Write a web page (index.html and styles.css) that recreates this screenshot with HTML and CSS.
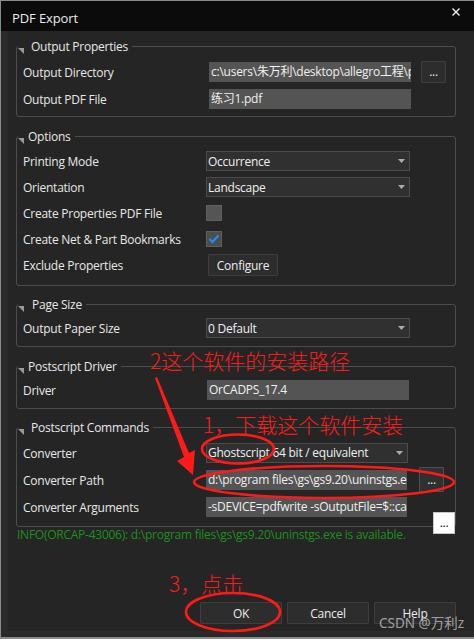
FILE: index.html
```html
<!DOCTYPE html>
<html>
<head>
<meta charset="utf-8">
<title>PDF Export</title>
<link rel="stylesheet" href="styles.css">
</head>
<body>
<div class="window">
  <div class="titlebar">
    <span class="title">PDF Export</span>
    <svg class="close" width="8" height="8" viewBox="0 0 8 8"><path d="M0.5 0.5 L7.5 7.5 M7.5 0.5 L0.5 7.5" stroke="#f2f2f2" stroke-width="1.4" fill="none"/></svg>
  </div>
  <div class="content">
    <fieldset class="group g1">
      <legend><svg class="tri" width="6" height="6" viewBox="0 0 6 6"><polygon points="0,0 6,0 6,6" fill="#9a9a9a"/></svg><span class="ltext">Output Properties</span></legend>
      <div class="row">
        <span class="lbl">Output Directory</span>
        <div class="field f-out">c:\users\朱万利\desktop\allegro工程\pcb</div>
        <button class="dots">...</button>
      </div>
      <div class="row">
        <span class="lbl">Output PDF File</span>
        <div class="field f-out">练习1.pdf</div>
      </div>
    </fieldset>

    <fieldset class="group g2">
      <legend><svg class="tri" width="6" height="6" viewBox="0 0 6 6"><polygon points="0,0 6,0 6,6" fill="#9a9a9a"/></svg><span class="ltext">Options</span></legend>
      <div class="row r26">
        <span class="lbl">Printing Mode</span>
        <div class="select"><span>Occurrence</span><svg class="caret" width="7" height="4" viewBox="0 0 7 4"><polygon points="0,0 7,0 3.5,4" fill="#a3adbb"/></svg></div>
      </div>
      <div class="row r26">
        <span class="lbl">Orientation</span>
        <div class="select"><span>Landscape</span><svg class="caret" width="7" height="4" viewBox="0 0 7 4"><polygon points="0,0 7,0 3.5,4" fill="#a3adbb"/></svg></div>
      </div>
      <div class="row r26">
        <span class="lbl">Create Properties PDF File</span>
        <div class="check"></div>
      </div>
      <div class="row r26">
        <span class="lbl">Create Net &amp; Part Bookmarks</span>
        <div class="check checked"><svg width="14" height="14" viewBox="0 0 14 14"><path d="M2.5 7 L5.5 10 L11.5 3.5" stroke="#1e90ff" stroke-width="2" fill="none"/></svg></div>
      </div>
      <div class="row r26">
        <span class="lbl">Exclude Properties</span>
        <button class="btn configure">Configure</button>
      </div>
    </fieldset>

    <fieldset class="group g3">
      <legend><svg class="tri" width="6" height="6" viewBox="0 0 6 6"><polygon points="0,0 6,0 6,6" fill="#9a9a9a"/></svg><span class="ltext wide-gap">Page Size</span></legend>
      <div class="row r26">
        <span class="lbl">Output Paper Size</span>
        <div class="select"><span>0 Default</span><svg class="caret" width="7" height="4" viewBox="0 0 7 4"><polygon points="0,0 7,0 3.5,4" fill="#a3adbb"/></svg></div>
      </div>
    </fieldset>

    <fieldset class="group g4">
      <legend><svg class="tri" width="6" height="6" viewBox="0 0 6 6"><polygon points="0,0 6,0 6,6" fill="#9a9a9a"/></svg><span class="ltext">Postscript Driver</span></legend>
      <div class="row">
        <span class="lbl">Driver</span>
        <div class="field f-drv">OrCADPS_17.4</div>
      </div>
    </fieldset>

    <fieldset class="group g5">
      <legend><svg class="tri" width="6" height="6" viewBox="0 0 6 6"><polygon points="0,0 6,0 6,6" fill="#9a9a9a"/></svg><span class="ltext">Postscript Commands</span></legend>
      <div class="row">
        <span class="lbl">Converter</span>
        <div class="select s-conv"><span>Ghostscript 64 bit / equivalent</span><svg class="caret" width="7" height="4" viewBox="0 0 7 4"><polygon points="0,0 7,0 3.5,4" fill="#a3adbb"/></svg></div>
      </div>
      <div class="row">
        <span class="lbl">Converter Path</span>
        <div class="field f-cmd">d:\program files\gs\gs9.20\uninstgs.exe</div>
        <button class="dots dots-cmd">...</button>
      </div>
      <div class="row">
        <span class="lbl">Converter Arguments</span>
        <div class="field f-cmd">-sDEVICE=pdfwrite -sOutputFile=$::capPdfUtil::mPdfFilePath</div>
      </div>
    </fieldset>

    <div class="info">INFO(ORCAP-43006): d:\program files\gs\gs9.20\uninstgs.exe is available.</div>

    <div class="actions">
      <button class="btn action">OK</button>
      <button class="btn action">Cancel</button>
      <button class="btn action">Help</button>
    </div>
  </div>

  <button class="dots-focus">...</button>

  <svg class="annot" width="474" height="639" viewBox="0 0 474 639">
    <ellipse cx="237" cy="448" rx="36" ry="14.5" fill="none" stroke="#ff1a1a" stroke-width="2.6"/>
    <ellipse cx="323" cy="481" rx="130" ry="16" fill="none" stroke="#ff1a1a" stroke-width="2.6"/>
    <ellipse cx="232" cy="611" rx="47" ry="19" fill="none" stroke="#ff1a1a" stroke-width="2.6"/>
    <polygon points="154,377 156,376 188,452 194,449 192,474 176,460 183,456" fill="#ff1a1a"/>
  </svg>
  <span class="note note-2">2这个软件的安装路径</span>
  <span class="note note-1">1，下载这个软件安装</span>
  <span class="note note-3">3，点击</span>
  <span class="watermark">CSDN @万利z</span>
</div>
</body>
</html>
```

FILE: styles.css
```css
* {
  box-sizing: border-box;
}

html, body {
  margin: 0;
  padding: 0;
  background: #242524;
}

body {
  font-family: "Open Sans", "Noto Sans CJK SC", sans-serif;
  font-size: 12px;
  letter-spacing: -0.25px;
  color: #e8e8e8;
}

.window {
  position: relative;
  width: 474px;
  height: 639px;
  border-top: 1px solid #8a8a8a;
  border-left: 1px solid #8a8a8a;
  border-bottom: 2px solid #8a8a8a;
  background: #242524;
  overflow: hidden;
  display: flex;
  flex-direction: column;
}

.titlebar {
  height: 30px;
  flex: none;
  background: #0b0b0b;
  display: flex;
  justify-content: space-between;
  align-items: center;
  padding: 0 14px 0 11px;
}

.title {
  font-size: 13px;
  letter-spacing: -0.1px;
  color: #ececec;
  margin-top: 3px;
}

.close {
  align-self: flex-start;
  margin-top: 7px;
}

.content {
  flex: 1;
  border-left: 7px solid #292a29;
  border-bottom: 6px solid #292a29;
  padding-left: 8px;
  display: flex;
  flex-direction: column;
}

.group {
  width: 440px;
  margin: 0;
  padding: 0 0 0 6px;
  border: 1px solid #4c4d4c;
  border-radius: 3px;
  min-width: 0;
}

.group legend {
  display: flex;
  align-items: center;
  height: 16px;
  padding: 0 4px 0 0;
  margin-left: -5px;
  font-size: 12px;
  color: #e8e8e8;
}

.tri {
  align-self: flex-end;
  margin-right: 7px;
  flex: none;
}

.ltext.wide-gap {
  margin-left: 1px;
}

.g1 { margin-top: 7px; padding-top: 4px; padding-bottom: 4px; }
.g2 { margin-top: 11px; padding-top: 4px; padding-bottom: 7px; }
.g3 { margin-top: 10px; padding-top: 3px; padding-bottom: 5px; }
.g4 { margin-top: 11px; padding-top: 2px; padding-bottom: 5px; }
.g5 { margin-top: 10px; padding-top: 4px; padding-bottom: 6px; }

.g2 .ltext { margin-left: -3px; }
.g4 .ltext { margin-left: -3px; }

.row {
  height: 27px;
  display: grid;
  grid-template-columns: 183px auto auto;
  justify-content: start;
  align-items: center;
}

.row.r26 {
  height: 26px;
}

.lbl {
  white-space: nowrap;
  padding-top: 1px;
}

.field {
  height: 20px;
  line-height: 20px;
  background: #545454;
  color: #f0f0f0;
  padding-left: 2px;
  white-space: nowrap;
  overflow: hidden;
}

.f-out {
  width: 202px;
  margin-left: 3px;
}

.f-drv {
  width: 202px;
  margin-left: 1px;
}

.f-cmd {
  width: 201px;
}

.select {
  width: 204px;
  height: 20px;
  background: #2f302f;
  border: 1px solid #4c4c4c;
  display: flex;
  align-items: center;
  justify-content: space-between;
  padding: 0 4px 0 1px;
  color: #f0f0f0;
  white-space: nowrap;
}

.s-conv {
  width: 202px;
}

.check {
  width: 16px;
  height: 16px;
  background: #555555;
  border: 1px solid #5f5f5f;
  display: flex;
  align-items: center;
  justify-content: center;
}

.check.checked {
  background: #4d4d4d;
}

button {
  font-family: "Open Sans", "Noto Sans CJK SC", sans-serif;
  font-size: 12px;
  letter-spacing: -0.25px;
  color: #ececec;
  padding: 0;
  cursor: default;
}

.btn {
  background: #2d2d2d;
  border: 1px solid #3e3e3e;
  border-radius: 1px;
}

.configure {
  width: 70px;
  height: 22px;
  margin-left: 2px;
}

.dots {
  width: 25px;
  height: 22px;
  margin-left: 10px;
  background: #2d2d2d;
  border: 1px solid #3e3e3e;
  border-radius: 1px;
  line-height: 14px;
}

.dots-cmd {
  margin-left: 12px;
  height: 25px;
  background: #303030;
  border-color: #505050;
}

.info {
  height: 16px;
  line-height: 16px;
  padding-left: 1px;
  color: #1f8f1f;
  white-space: nowrap;
}

.actions {
  width: 440px;
  margin-top: 59px;
  display: flex;
  justify-content: flex-end;
  gap: 5px;
}

.action {
  width: 82px;
  height: 22px;
}

/* focused browse button that sits over the group border */
.dots-focus {
  position: absolute;
  left: 432px;
  top: 511px;
  width: 22px;
  height: 22px;
  background: #ffffff;
  border: 1px solid #c8c8c8;
  color: #111;
  line-height: 12px;
}

/* red annotation layer */
.annot {
  position: absolute;
  left: 0;
  top: 0;
  pointer-events: none;
}

.note {
  position: absolute;
  font-family: "Noto Sans CJK SC", sans-serif;
  font-weight: 300;
  font-size: 21px;
  line-height: 24px;
  letter-spacing: 0;
  color: #ff1a1a;
  white-space: nowrap;
}

.note-2 { left: 149px; top: 347px; }
.note-1 { left: 202px; top: 411px; }
.note-3 { left: 168px; top: 570px; }

.watermark {
  position: absolute;
  left: 378px;
  top: 612px;
  font-family: "Noto Sans", "Noto Sans CJK SC", sans-serif;
  font-size: 13.5px;
  line-height: 20px;
  letter-spacing: 0;
  color: rgba(230, 230, 230, 0.65);
  white-space: nowrap;
}
```
